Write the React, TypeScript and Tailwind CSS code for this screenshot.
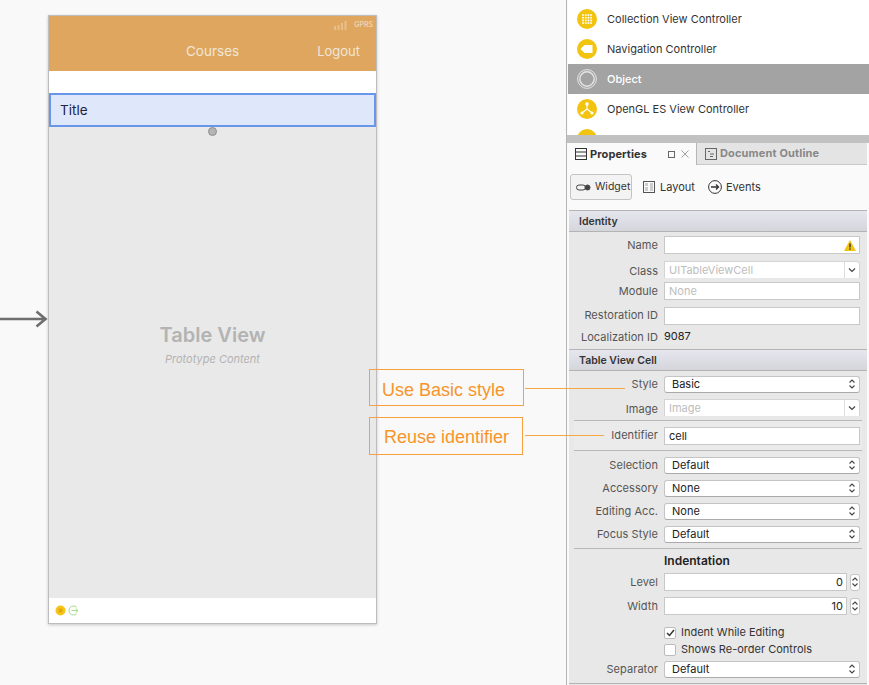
import type { ReactNode } from 'react';

const libraryRows = [
  { name: 'Collection View Controller', icon: 'grid' },
  { name: 'Navigation Controller', icon: 'nav' },
  { name: 'Object', icon: 'object' },
  { name: 'OpenGL ES View Controller', icon: 'gl' },
];

function LibraryIcon({ type }: { type: string }) {
  if (type === 'object') {
    return (
      <svg width="20" height="20" viewBox="0 0 20 20" fill="none" stroke="#e6e6e6">
        <circle cx="10" cy="10" r="9.4" />
        <circle cx="10" cy="10" r="7.2" strokeWidth="1.4" />
      </svg>
    );
  }
  return (
    <svg width="20" height="20" viewBox="0 0 20 20">
      <circle cx="10" cy="10" r="10" fill="#f3c40f" />
      {type === 'grid' &&
        [6, 8.7, 11.4, 14].map((x) =>
          [6, 8.7, 11.4, 14].map((y) => <rect key={`${x}-${y}`} x={x - 0.8} y={y - 0.8} width="1.7" height="1.7" fill="#fff" />),
        )}
      {type === 'nav' && <path d="M3.5 10 L7.5 6 H15.5 V14 H7.5 Z" fill="#fff" />}
      {type === 'gl' && (
        <g stroke="#fff" strokeWidth="1.1" fill="#fff">
          <path d="M10 10 V5.5 M10 10 L5.5 13.5 M10 10 L14.5 13.5" fill="none" />
          <circle cx="10" cy="5" r="1.2" />
          <circle cx="5" cy="14" r="1" />
          <circle cx="15" cy="14" r="1" />
        </g>
      )}
    </svg>
  );
}

function SectionHeader({ title }: { title: string }) {
  return (
    <div className="h-[22px] flex items-center pl-[10px] pt-[1px] bg-gradient-to-b from-[#e6e6ee] to-[#d5d5dc] border-y border-[#b4b4b4] text-[10.5px] font-semibold text-[#333]">
      {title}
    </div>
  );
}

function Row({ label, className, labelClass, children }: { label: string; className: string; labelClass?: string; children: ReactNode }) {
  return (
    <div className={`flex items-center h-[18px] ${className}`}>
      <div className={`w-[89px] text-right text-[11px] tracking-[0.05px] text-[#555] whitespace-nowrap shrink-0 ${labelClass ?? ''}`}>{label}</div>
      <div className="ml-[6px] w-[196px] shrink-0">{children}</div>
    </div>
  );
}

function TextInput({ value, placeholder, right }: { value?: string; placeholder?: string; right?: ReactNode }) {
  return (
    <div className="h-[18px] bg-white border border-[#c8c8c8] flex items-center justify-between pl-[4px] pr-[3px] text-[11px] text-[#222]">
      {value ? <span className="pt-[1px]">{value}</span> : <span className="pt-[1px] text-[#bdbdbd]">{placeholder}</span>}
      {right}
    </div>
  );
}

function Updown() {
  return (
    <svg width="8" height="12" viewBox="0 0 8 12" fill="none" stroke="#444" strokeWidth="1.1">
      <path d="M1.5 4.5 L4 2 L6.5 4.5 M1.5 7.5 L4 10 L6.5 7.5" />
    </svg>
  );
}

function Select({ value }: { value: string }) {
  return (
    <div className="h-[17px] bg-white border border-[#c4c4c4] border-b-[#aaa] rounded-[3px] flex items-center justify-between pl-[7px] pr-[3px] text-[11px] text-[#222]">
      <span>{value}</span>
      <Updown />
    </div>
  );
}

function Combo({ placeholder }: { placeholder: string }) {
  return (
    <div className="h-[17px] bg-white border border-[#d4d4d4] border-b-0 rounded-tr-[3px] flex items-center justify-between pl-[4px] text-[11px] text-[#bdbdbd]">
      <span className="pt-[2px]">{placeholder}</span>
      <span className="w-[15px] h-full border-l border-[#ddd] flex items-center justify-center">
        <svg width="8" height="6" viewBox="0 0 8 6" fill="none" stroke="#444" strokeWidth="1.2">
          <path d="M1 1.5 L4 4.5 L7 1.5" />
        </svg>
      </span>
    </div>
  );
}

function NumberRow({ label, value, className }: { label: string; value: string; className: string }) {
  return (
    <Row label={label} className={className}>
      <div className="flex items-center">
        <div className="w-[183px] h-[18px] bg-white border border-[#c8c8c8] text-right pr-[3px] text-[11px] leading-[17px] text-[#222]">{value}</div>
        <div className="ml-[3px] w-[10px] h-[17px] bg-white border border-[#c4c4c4] rounded-[3px] flex items-center justify-center overflow-hidden shrink-0">
          <span className="shrink-0 flex">
            <Updown />
          </span>
        </div>
      </div>
    </Row>
  );
}

export default function App() {
  return (
    <div className="relative w-[869px] h-[685px] overflow-hidden flex bg-[#f9f9f9] font-['Inter',sans-serif]">
      {/* storyboard canvas */}
      <div className="w-[566px] h-[685px] shrink-0 pl-[48px] pt-[15px] relative">
        <svg className="absolute left-0 top-[309px]" width="48" height="20" viewBox="0 0 48 20" fill="none" stroke="#6e6e6e" strokeWidth="2.6">
          <path d="M0 10 H45 M36.5 2.5 L45.5 10 L36.5 17.5" />
        </svg>

        <div className="relative w-[329px] h-[609px] bg-white border border-[#bdbdbd] shadow-[0_1px_3px_rgba(0,0,0,0.2)] flex flex-col">
          <div className="h-[55px] bg-[#dfa660] shrink-0 relative flex items-center justify-end">
            <div className="absolute top-[4px] right-[3px] flex items-center gap-[7px] text-[7px] text-[#f0e0c8]">
              <svg width="13" height="9" viewBox="0 0 13 9" fill="#e8c08c">
                <rect x="0" y="5" width="2" height="4" />
                <rect x="3.5" y="4" width="2" height="5" />
                <rect x="7" y="2" width="2" height="7" />
                <rect x="10.5" y="0" width="2" height="9" />
              </svg>
              <span>GPRS</span>
            </div>
            <span className="absolute left-[137px] top-[25px] text-[13.5px] text-[#f0e6d8]">Courses</span>
            <span className="mr-[16px] mt-[16px] text-[13px] text-[#f0e6d8]">Logout</span>
          </div>
          <div className="h-[22px] shrink-0 bg-white" />
          <div className="h-[34px] shrink-0 bg-[#dfe7fb] border-2 border-[#6796ea] pl-[9px] flex items-center text-[13.5px] text-[#1c2340]">Title</div>
          <div className="flex-1 bg-[#e9e9e9] flex flex-col items-center pt-[194px] relative">
            <span className="absolute left-[159px] top-0 w-[9px] h-[9px] rounded-full bg-[#b4b4b4] border border-[#8f8f8f]" />
            <div className="text-[20px] leading-[28px] font-semibold text-[#b3b3b3]">Table View</div>
            <div className="mt-[2px] text-[11px] leading-[16px] italic text-[#b3b3b3]">Prototype Content</div>
          </div>
          <div className="h-[25px] shrink-0 bg-white flex items-center pl-[6px] gap-[2px]">
            <svg width="11" height="11" viewBox="0 0 11 11">
              <circle cx="5.5" cy="5.5" r="5" fill="#f5c518" />
              <rect x="3.5" y="3.5" width="4" height="4" fill="#e4a90f" />
            </svg>
            <svg width="11" height="11" viewBox="0 0 11 11" fill="none" stroke="#a6d98c" strokeWidth="1">
              <path d="M8.5 2.2 A4.5 4.5 0 1 0 8.5 8.8 M3.5 5.5 H10 M7.8 3.5 L10 5.5 L7.8 7.5" />
            </svg>
          </div>
        </div>
      </div>

      {/* right hand panel */}
      <div className="w-[303px] h-[685px] shrink-0 border-l border-[#b5b5b5] flex flex-col bg-[#fafafa]">
        <div className="h-[135px] shrink-0 bg-white pt-[4px] ml-[1px] overflow-hidden">
          {libraryRows.map((row) => (
            <div key={row.name} className={`h-[30px] flex items-center pl-[9px] gap-[10px] text-[11px] ${row.name === 'Object' ? 'bg-[#a3a3a3] text-white font-medium' : 'text-[#333]'}`}>
              <LibraryIcon type={row.icon} />
              <span>{row.name}</span>
            </div>
          ))}
          <div className="h-[30px] flex items-center pl-[9px] gap-[10px]">
            <LibraryIcon type="blank" />
          </div>
        </div>
        <div className="h-[8px] shrink-0 bg-[#c1c1c1]" />

        <div className="h-[22px] shrink-0 flex">
          <div className="w-[130px] flex items-center pl-[8px] border-r border-[#b5b5b5] text-[11px] font-bold tracking-[0.1px] text-[#333]">
            <svg className="mr-[3px]" width="12" height="12" viewBox="0 0 12 12" fill="none" stroke="#333">
              <rect x="0.5" y="0.5" width="11" height="11" />
              <path d="M0.5 4 H11.5 M0.5 8 H11.5" />
            </svg>
            <span>Properties</span>
            <span className="ml-[21px] w-[7px] h-[7px] border border-[#666]" />
            <svg className="ml-[6px]" width="8" height="8" viewBox="0 0 8 8" stroke="#888" strokeWidth="0.8">
              <path d="M0.5 0.5 L7.5 7.5 M7.5 0.5 L0.5 7.5" />
            </svg>
          </div>
          <div className="w-[170px] bg-[#e4e4e4] border-b border-[#c8c8c8] flex items-center pl-[8px] text-[11px] font-bold tracking-[0.15px] text-[#888]">
            <svg className="mr-[3px]" width="12" height="12" viewBox="0 0 12 12" fill="none" stroke="#666">
              <rect x="0.5" y="0.5" width="11" height="11" />
              <path d="M3 3.5 H5 M5 6 H9 M5 8.5 H8" />
            </svg>
            Document Outline
          </div>
        </div>

        <div className="h-[45px] shrink-0 flex items-center pl-[3px] pb-[1px] text-[11px] text-[#333]">
          <div className="w-[62px] h-[26px] rounded-[3px] border border-[#c4c4c4] bg-[#f3f3f3] flex items-center pl-[5px] gap-[4px] text-[10.5px]">
            <svg width="15" height="7" viewBox="0 0 15 7" fill="none" stroke="#444">
              <rect x="0.5" y="1" width="9" height="5" rx="2.5" />
              <circle cx="11.5" cy="3.5" r="2.5" fill="#444" />
            </svg>
            Widget
          </div>
          <svg className="ml-[11px] mr-[5px]" width="12" height="12" viewBox="0 0 12 12" fill="#ccc" stroke="#555">
            <rect x="0.5" y="0.5" width="11" height="11" fill="none" />
            <rect x="2" y="2" width="3" height="3" stroke="none" />
            <rect x="2" y="6" width="3" height="4" stroke="none" />
            <rect x="7" y="2" width="3" height="8" stroke="none" />
          </svg>
          Layout
          <svg className="ml-[13px] mr-[4px]" width="14" height="14" viewBox="0 0 14 14" fill="none" stroke="#333">
            <circle cx="7" cy="7" r="6.4" />
            <path d="M3 7 H10.5 M8 4.5 L10.5 7 L8 9.5" strokeWidth="1.3" />
          </svg>
          Events
        </div>

        <div className="flex-1 ml-[2px] mr-[2px] bg-[#e8e8e8]">
          <SectionHeader title="Identity" />
          <Row label="Name" className="mt-[4px]">
            <TextInput
              right={
                <svg width="12" height="11" viewBox="0 0 12 11">
                  <path d="M6 0 L12 11 H0 Z" fill="#f2c40f" />
                  <rect x="5.3" y="3.5" width="1.4" height="4" fill="#333" />
                  <rect x="5.3" y="8.3" width="1.4" height="1.4" fill="#333" />
                </svg>
              }
            />
          </Row>
          <Row label="Class" className="mt-[6px]" labelClass="translate-y-[2px]">
            <Combo placeholder="UITableViewCell" />
          </Row>
          <Row label="Module" className="mt-[4px]">
            <TextInput placeholder="None" />
          </Row>
          <Row label="Restoration ID" className="mt-[7px]" labelClass="-translate-y-[1px]">
            <TextInput />
          </Row>
          <Row label="Localization ID" className="mt-[3px]">
            <span className="block -translate-y-[1px] text-[11px] text-[#222]">9087</span>
          </Row>
          <div className="mt-[3px]">
            <SectionHeader title="Table View Cell" />
          </div>
          <Row label="Style" className="mt-[4px]">
            <Select value="Basic" />
          </Row>
          <Row label="Image" className="mt-[5px]" labelClass="translate-y-[2px]">
            <Combo placeholder="Image" />
          </Row>
          <div className="mt-[4px] mx-[5px] border-y border-[#b8b8b8] h-[31px] bg-[#ebebeb] flex items-center">
            <div className="w-[84px] text-right text-[11px] tracking-[0.05px] text-[#555]">Identifier</div>
            <div className="ml-[6px] w-[196px]">
              <TextInput value="cell" />
            </div>
          </div>
          <Row label="Selection" className="mt-[5px]">
            <Select value="Default" />
          </Row>
          <Row label="Accessory" className="mt-[5px]">
            <Select value="None" />
          </Row>
          <Row label="Editing Acc." className="mt-[5px]">
            <Select value="None" />
          </Row>
          <Row label="Focus Style" className="mt-[5px]">
            <Select value="Default" />
          </Row>
          <div className="mt-[5px] mx-[5px] border-t border-[#b8b8b8]" />
          <div className="h-[24px] pl-[95px] flex items-center text-[12px] font-semibold text-[#222]">Indentation</div>
          <NumberRow label="Level" value="0" className="mt-0" />
          <NumberRow label="Width" value="10" className="mt-[6px]" />
          <div className="ml-[95px] mt-[9px] h-[17px] flex items-center text-[11px] text-[#333]">
            <span className="w-[12px] h-[12px] mr-[5px] bg-white border border-[#bbb] rounded-[2px] flex items-center justify-center">
              <svg width="9" height="8" viewBox="0 0 9 8" fill="none" stroke="#333" strokeWidth="1.5">
                <path d="M1 4 L3.5 6.5 L8 1" />
              </svg>
            </span>
            Indent While Editing
          </div>
          <div className="ml-[95px] h-[17px] flex items-center text-[11px] text-[#333]">
            <span className="w-[12px] h-[12px] mr-[5px] bg-white border border-[#bbb] rounded-[2px]" />
            Shows Re-order Controls
          </div>
          <Row label="Separator" className="mt-[2px]">
            <Select value="Default" />
          </Row>
          <div className="mt-[5px] border-t border-[#b4b4b4]" />
        </div>
      </div>

      {/* callouts on top of the screenshot */}
      <div className="absolute left-[369px] top-[369px] w-[155px] h-[37px] border border-[#f9a03c] pl-[12px] pt-[6px] flex items-center font-['Liberation_Sans',sans-serif] text-[18px] text-[#f7952b]">
        Use Basic style
      </div>
      <div className="absolute left-[369px] top-[417px] w-[154px] h-[38px] border border-[#f9a03c] pl-[14px] pt-[2px] flex items-center font-['Liberation_Sans',sans-serif] text-[18px] text-[#f7952b]">
        Reuse identifier
      </div>
      <div className="absolute left-[525px] top-[388px] w-[100px] h-px bg-[#f9a645]" />
      <div className="absolute left-[525px] top-[435px] w-[79px] h-px bg-[#f9a645]" />
    </div>
  );
}
